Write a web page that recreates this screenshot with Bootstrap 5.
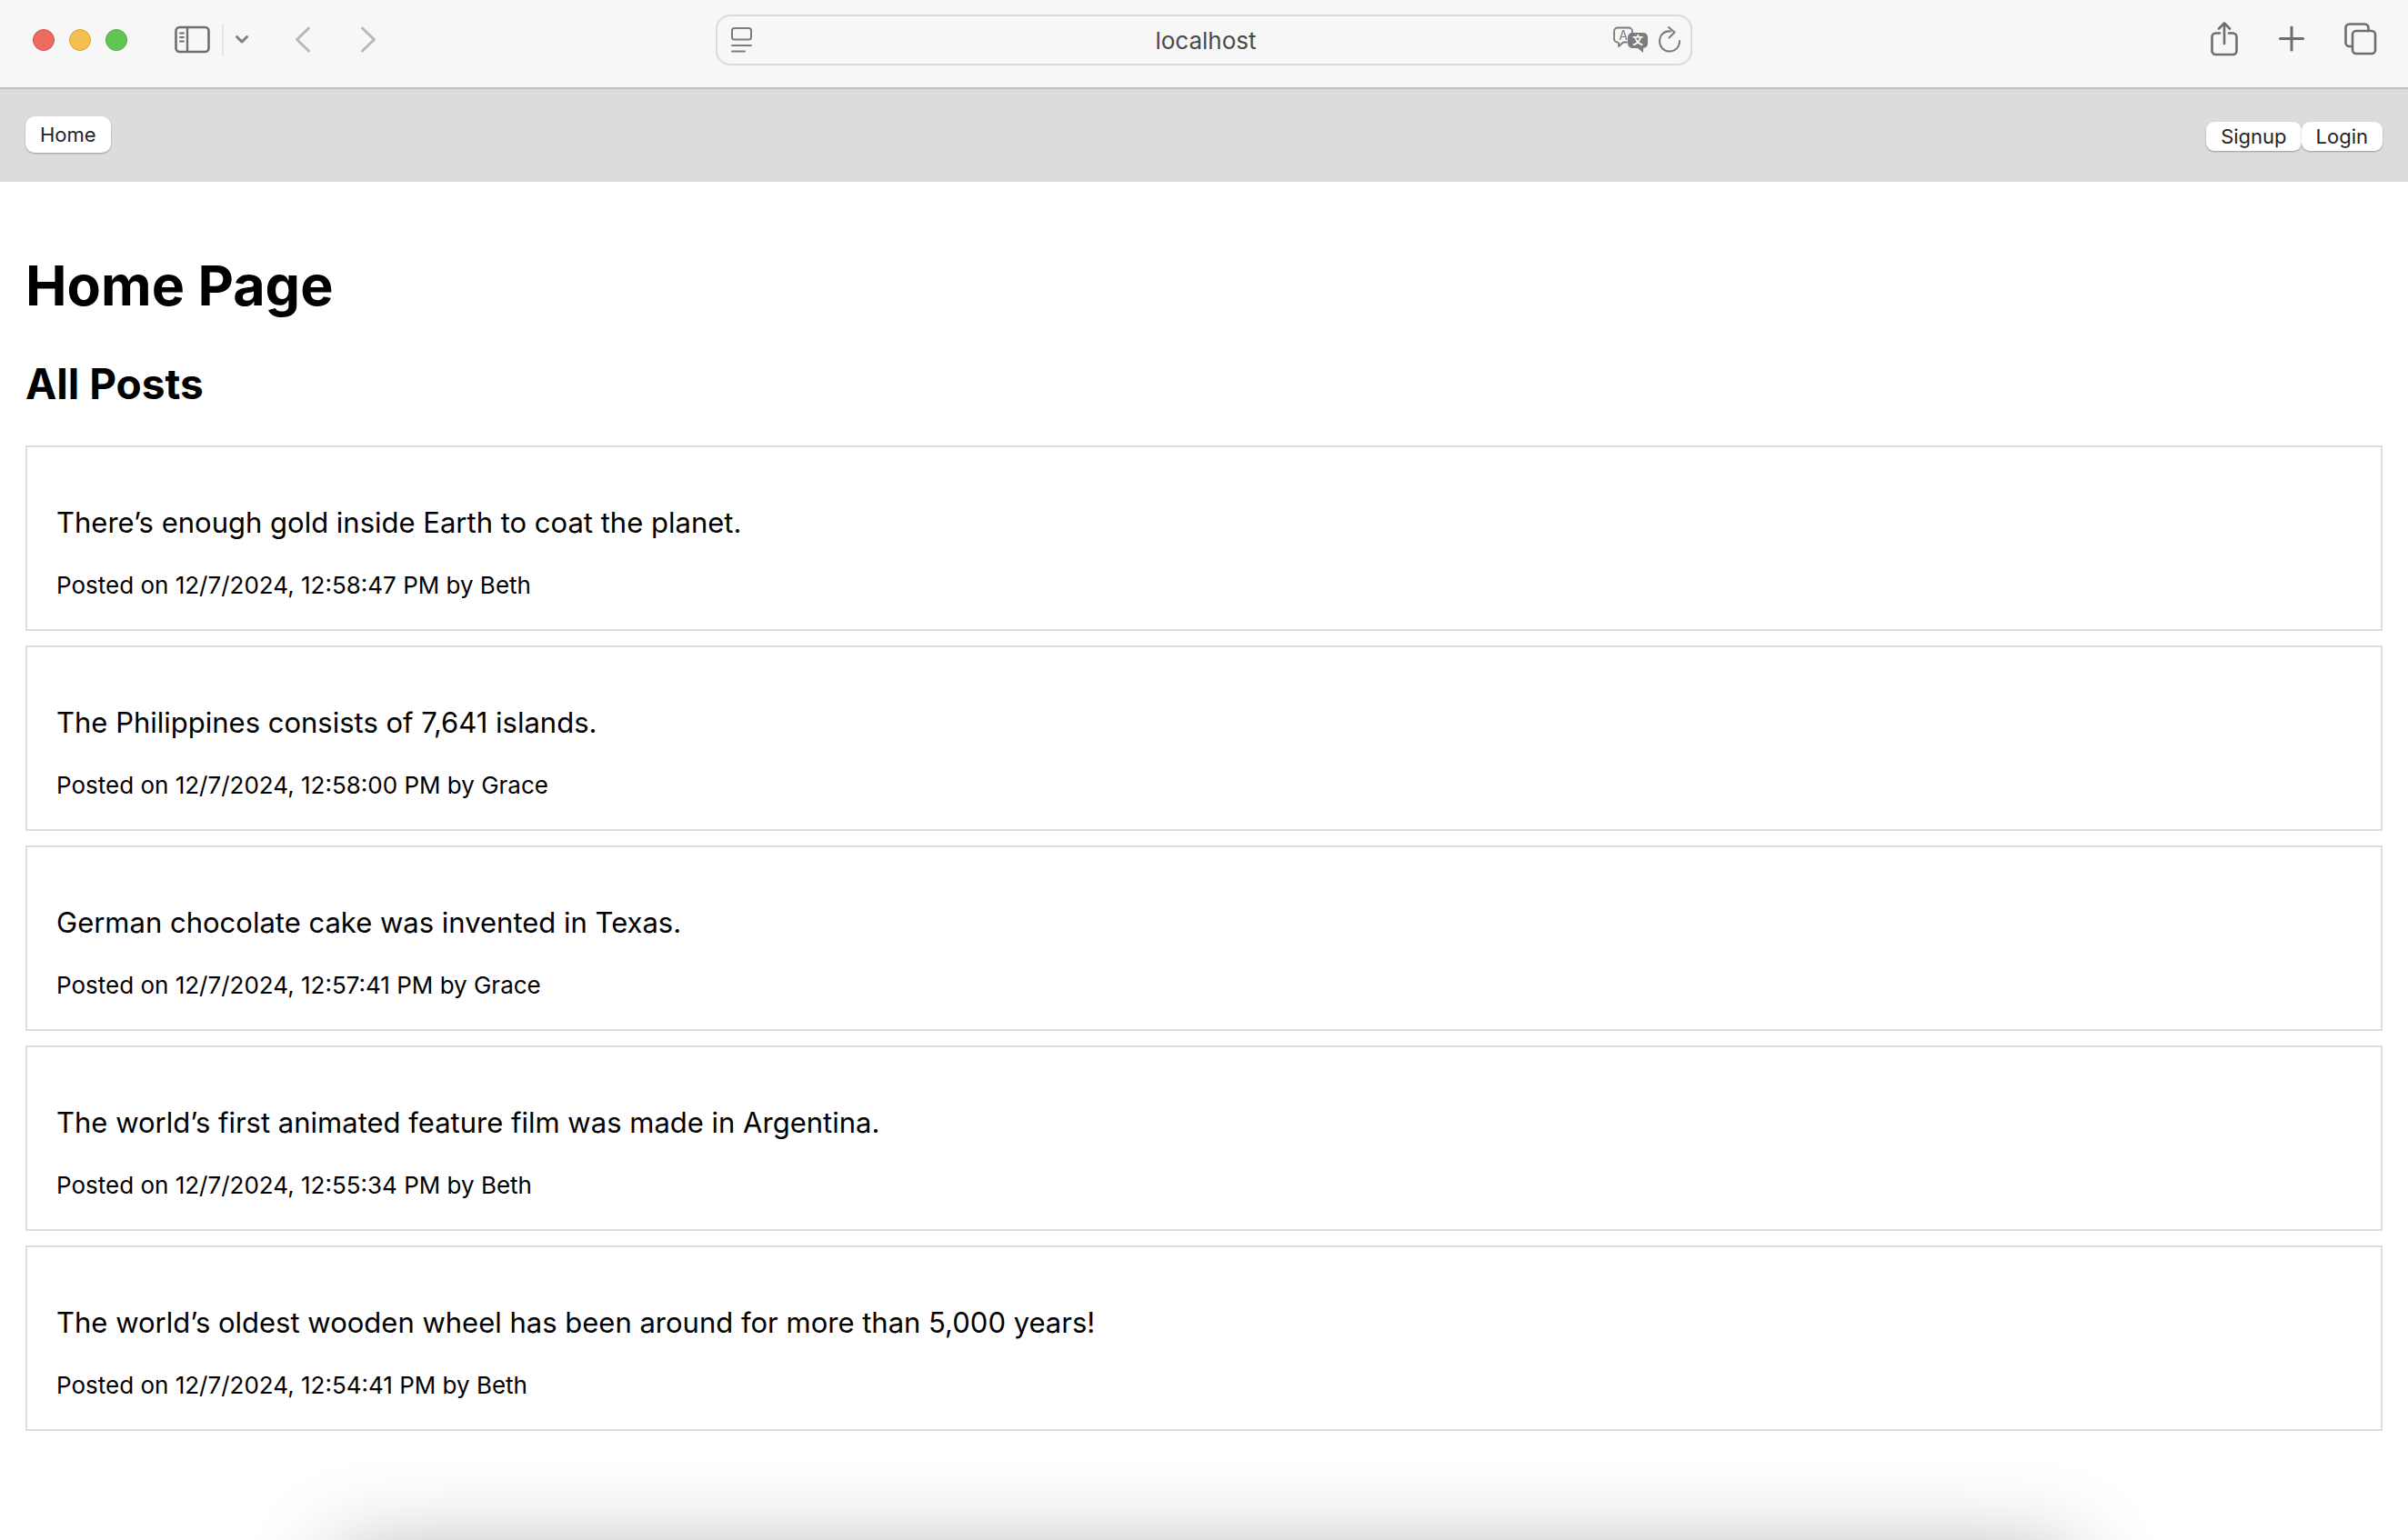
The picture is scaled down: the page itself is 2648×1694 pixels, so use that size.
<!DOCTYPE html>
<html lang="en">
<head>
<meta charset="utf-8">
<meta name="viewport" content="width=device-width, initial-scale=1">
<title>Home Page</title>
<link href="https://cdn.jsdelivr.net/npm/bootstrap@5.3.0/dist/css/bootstrap.min.css" rel="stylesheet">
<style>
body { font-family: Inter, "Liberation Sans", sans-serif; color: #000; background: #fff; }
svg { display: block; fill: none; stroke: #6e6e6e; stroke-width: 2; stroke-linecap: round; stroke-linejoin: round; }

/* browser toolbar */
.toolbar { height: 98px; padding: 0 32px 8px; background: #f7f7f7; border-bottom: 2px solid #c0c0c0; }
.tool-btn { padding: 0; border: 0; background: none; }
.light { width: 24px; height: 24px; padding: 0; border-radius: 50%; border: 1px solid; }
.light-close { background: #ec6a5e; border-color: #d05549; }
.light-min { background: #f4bf4f; border-color: #d8a13c; }
.light-max { background: #61c554; border-color: #52a843; }
.light-group { gap: 16px; margin-right: 52px; }
.divider-bar { width: 2px; height: 36px; margin: 0 12px; background: #e6e6e6; }
.nav-arrows { gap: 54px; margin-left: 50px; }
.tool-group { gap: 44px; }
.address { width: 1074px; max-width: 42%; height: 56px; padding: 0 10px 0 14px; border: 2px solid #dadada; border-radius: 16px; }
.address input { min-width: 0; border: 0; background: none; text-align: center; font-size: 26px; color: #4a4a4a; outline: 0; }
.address-side { width: 80px; gap: 10px; }

/* site header */
.site-header { height: 102px; padding: 0 28px 2px; background: #dcdcdc; }
.site-btn { padding: 0 16px; height: 32px; border: 0; border-radius: 9px; background: #fff; color: #242424; font-size: 22px; line-height: 32px; box-shadow: 0 1px 2px rgba(0,0,0,.3); }
.site-btn-tall { height: 40px; line-height: 40px; border-radius: 10px; }

/* posts */
.page-body { padding: 76px 28px 0; }
.page-title { font-size: 61px; line-height: 76px; font-weight: 700; margin: 0 0 42px; }
.page-subtitle { font-size: 46px; line-height: 56px; font-weight: 700; margin: 0 0 40px; }
.post-list { gap: 16px; }
.post { border: 2px solid #dcdcdc; padding: 64px 32px 32px; }
.post-text { font-size: 31px; line-height: 38px; margin: 0 0 34px; }
.post-meta { font-size: 26px; line-height: 32px; margin: 0; }

/* shadow cast from a window below this one */
.window-frame { min-height: 100vh; overflow: hidden; }
.under-shadow { top: calc(100% + 16px); left: 370px; right: 370px; height: 200px; box-shadow: 0 0 100px rgba(0,0,0,.32); pointer-events: none; }
</style>
<script src="https://cdn.jsdelivr.net/npm/bootstrap@5.3.0/dist/js/bootstrap.bundle.min.js"></script>
</head>
<body>
<div class="window-frame position-relative">
  <div class="toolbar d-flex align-items-center" role="toolbar" aria-label="Browser">
    <div class="d-flex align-items-center flex-fill w-25 ps-1">
      <div class="light-group d-flex">
        <button type="button" class="light light-close" aria-label="Close"></button>
        <button type="button" class="light light-min" aria-label="Minimize"></button>
        <button type="button" class="light light-max" aria-label="Zoom"></button>
      </div>
      <button type="button" class="tool-btn" aria-label="Sidebar">
        <svg width="40" height="32" viewBox="0 0 40 32"><rect x="1.5" y="2" width="36" height="27" rx="4" stroke-width="2.6"/><path d="M14 2v27" stroke-width="2.4"/><path d="M6 8.500h4M6 13h4M6 17.500h4" stroke-width="1.800"/></svg>
      </button>
      <span class="divider-bar"></span>
      <button type="button" class="tool-btn" aria-label="Tab groups">
        <svg width="16" height="16" viewBox="0 0 16 16"><path d="M2.500 4.500l5.500 5.500 5.500-5.500" stroke="#808080" stroke-width="3"/></svg>
      </button>
      <div class="nav-arrows d-flex">
        <button type="button" class="tool-btn" aria-label="Back"><svg width="18" height="32" viewBox="0 0 18 32"><path d="M15.500 3L2.500 15.500l13 12.500" stroke="#b8b8b8" stroke-width="3"/></svg></button>
        <button type="button" class="tool-btn" aria-label="Forward"><svg width="18" height="32" viewBox="0 0 18 32"><path d="M2.500 3l13 12.500-13 12.500" stroke="#b8b8b8" stroke-width="3"/></svg></button>
      </div>
    </div>
    <div class="address d-flex align-items-center flex-shrink-0">
      <div class="address-side d-flex">
        <button type="button" class="tool-btn" aria-label="Page menu"><svg width="26" height="30" viewBox="0 0 26 30"><path d="M4.500 2h16A2.500 2.500 0 0 1 23 4.500V12a2.500 2.500 0 0 1-2.500 2.500h-16A2.500 2.500 0 0 1 2 12V4.500A2.500 2.500 0 0 1 4.500 2zM2 21h21M2 27.500h14" stroke="#7c7c7c"/></svg></button>
      </div>
      <input type="text" class="flex-fill" value="localhost" aria-label="Address">
      <div class="address-side d-flex justify-content-end">
        <button type="button" class="tool-btn" aria-label="Translate">
          <svg width="40" height="30" viewBox="0 0 40 30"><path d="M22 7V5.500A4 4 0 0 0 18 1.500H6A4 4 0 0 0 2 5.500v8A4 4 0 0 0 5.500 17.500L7 18v4l5-4.500h4" stroke="#7c7c7c" stroke-width="1.800"/><path d="M22 7h12a5 5 0 0 1 5 5v7a5 5 0 0 1-5 5v5l-6-5h-6a5 5 0 0 1-5-5v-7a5 5 0 0 1 5-5z" fill="#7c7c7c" stroke="none"/><text x="12" y="14.500" text-anchor="middle" font-family="Inter, sans-serif" font-size="14" fill="#7c7c7c" stroke="none">A</text><text x="28" y="20" text-anchor="middle" font-family="Noto Sans CJK SC, sans-serif" font-weight="700" font-size="12" fill="#fff" stroke="none">文</text></svg>
        </button>
        <button type="button" class="tool-btn" aria-label="Reload"><svg width="26" height="30" viewBox="0 0 26 30"><path d="M14 5.500C6.500 4.500 2 10 2 16.500 2 23 7 27.500 13 27.500s11-4.500 11-11.500M12 1l6.500 5.500-6 6" stroke="#7c7c7c"/></svg></button>
      </div>
    </div>
    <div class="tool-group d-flex align-items-center justify-content-end flex-fill w-25">
      <button type="button" class="tool-btn" aria-label="Share"><svg width="32" height="40" viewBox="0 0 32 40"><path d="M11 12.500H6.500a4 4 0 0 0-4 4V32a4 4 0 0 0 4 4h19a4 4 0 0 0 4-4V16.500a4 4 0 0 0-4-4H21M16 24V2M10 7.500L16 1.500l6 6" stroke-width="2.600"/></svg></button>
      <button type="button" class="tool-btn" aria-label="New tab"><svg width="28" height="32" viewBox="0 0 28 32"><path d="M14 2v25M1.500 14.500h25" stroke-width="3"/></svg></button>
      <button type="button" class="tool-btn" aria-label="Tab overview"><svg width="38" height="38" viewBox="0 0 38 38"><rect x="9" y="9" width="25" height="25" rx="4" stroke-width="2.600"/><path d="M9 26H5.500a4 4 0 0 1-4-4V5.500a4 4 0 0 1 4-4h17a4 4 0 0 1 4 4V9" stroke-width="2.600"/></svg></button>
    </div>
  </div>

  <header class="site-header d-flex align-items-center justify-content-between">
    <button type="button" class="site-btn site-btn-tall">Home</button>
    <div class="d-flex pt-1"><button type="button" class="site-btn">Signup</button><button type="button" class="site-btn">Login</button></div>
  </header>

  <main class="page-body">
    <h1 class="page-title">Home Page</h1>
    <h2 class="page-subtitle">All Posts</h2>
    <div class="post-list d-flex flex-column">
      <article class="post"><p class="post-text">There’s enough gold inside Earth to coat the planet.</p><p class="post-meta">Posted on 12/7/2024, 12:58:47 PM by Beth</p></article>
      <article class="post"><p class="post-text">The Philippines consists of 7,641 islands.</p><p class="post-meta">Posted on 12/7/2024, 12:58:00 PM by Grace</p></article>
      <article class="post"><p class="post-text">German chocolate cake was invented in Texas.</p><p class="post-meta">Posted on 12/7/2024, 12:57:41 PM by Grace</p></article>
      <article class="post"><p class="post-text">The world’s first animated feature film was made in Argentina.</p><p class="post-meta">Posted on 12/7/2024, 12:55:34 PM by Beth</p></article>
      <article class="post"><p class="post-text">The world’s oldest wooden wheel has been around for more than 5,000 years!</p><p class="post-meta">Posted on 12/7/2024, 12:54:41 PM by Beth</p></article>
    </div>
  </main>
  <div class="under-shadow position-absolute" aria-hidden="true"></div>
</div>
</body>
</html>
